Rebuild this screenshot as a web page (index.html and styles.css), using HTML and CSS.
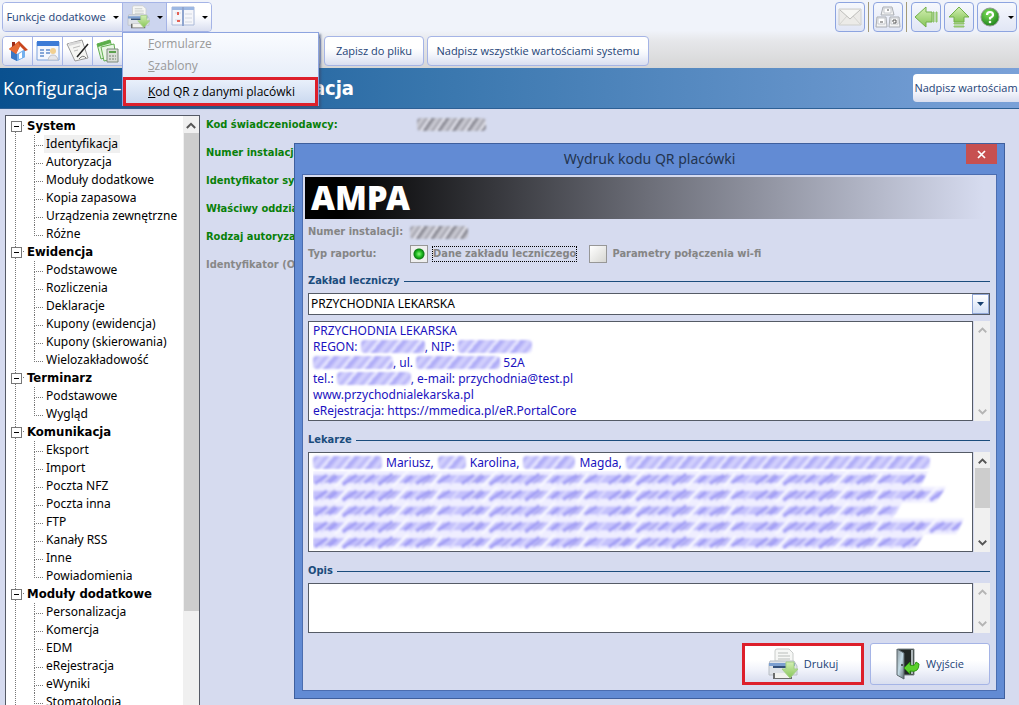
FILE: index.html
```html
<!DOCTYPE html>
<html lang="pl">
<head>
<meta charset="utf-8">
<title>Konfiguracja – System – Identyfikacja</title>
<link rel="stylesheet" href="styles.css">
</head>
<body>
<svg class="defs" aria-hidden="true">
  <defs>
    <linearGradient id="gGreen" x1="0" y1="0" x2="0" y2="1"><stop offset="0" stop-color="#d4efb4"/><stop offset="1" stop-color="#86c558"/></linearGradient>
    <linearGradient id="gDoor" x1="0" y1="0" x2="1" y2="1"><stop offset="0" stop-color="#8f999f"/><stop offset=".5" stop-color="#c3dbe5"/><stop offset="1" stop-color="#5f6b70"/></linearGradient>
    <radialGradient id="gHelp" cx=".4" cy=".3" r=".8"><stop offset="0" stop-color="#7ddf5a"/><stop offset="1" stop-color="#157a14"/></radialGradient>
    <filter id="soft" x="-5%" y="-20%" width="110%" height="140%"><feGaussianBlur stdDeviation="0.9"/></filter>
    <pattern id="scribble" width="148" height="16" patternUnits="userSpaceOnUse">
      <path d="M0 0H148V16H0Z" fill="#eeedff"/>
      <path d="M0 4H148V12H0Z" fill="#c4c1fc"/>
      <path d="M2 13 14 4M16 12 24 5M30 14 44 4M52 12 62 4M66 14 80 3M92 12 100 5M104 13 118 4M126 12 138 4" stroke="#a19df5" stroke-width="3"/>
      <path d="M22 16 38 0M80 16 96 0M118 16 130 2" stroke="#f8f8ff" stroke-width="3"/>
      <path d="M8 14 18 4M46 14 56 4M60 14 70 4M98 14 108 4M138 14 147 4" stroke="#dddbfe" stroke-width="2"/>
      <path d="M12 12 22 3M42 13 52 4M74 13 84 4M110 14 122 3" stroke="#8580de" stroke-width="1"/>
    </pattern>
    <symbol id="printer" viewBox="0 0 30 32">
      <path d="M7 13V3Q7 1 9 1H21L25 5V14Z" fill="#f6f7f5" stroke="#c9ccca"/>
      <path d="M10 5H20M10 8H22M10 11H22" stroke="#b9bdba"/>
      <path d="M2 13H26L29 18V27H1V16Z" fill="#dfe3e8" stroke="#b8bec5"/>
      <path d="M1 15H27V18H1Z" fill="#7c9fd0"/><path d="M5 18H23V20H5Z" fill="#34507a"/>
      <path d="M5 25H24V31H5Z" fill="#6b6d6c"/><path d="M7 25H22V30H7Z" fill="#f2f2ee"/>
      <path d="M18 14H26V21H30L22 30 14 21H18Z" fill="url(#gGreen)" stroke="#a4cf85"/>
    </symbol>
    <symbol id="up" viewBox="0 0 12 8"><path d="M1 7 6 2 11 7" fill="none" stroke="currentColor" stroke-width="2.4"/></symbol>
    <symbol id="down" viewBox="0 0 12 8"><path d="M1 1 6 6 11 1" fill="none" stroke="currentColor" stroke-width="2.4"/></symbol>
  </defs>
</svg>

<header class="top">
  <div class="bar">
    <div class="group">
      <button class="seg wide">Funkcje dodatkowe<i class="caret"></i></button>
      <button class="seg open" aria-label="Drukuj"><svg width="23" height="24"><use href="#printer"/></svg><i class="caret"></i></button>
      <button class="seg" aria-label="Widok">
        <svg width="24" height="22" viewBox="0 0 24 22"><path d="M1 1H23V19H1Z" fill="#f5f6fa" stroke="#aab9d8"/><path d="M1 1H23V4H1Z" fill="#9db8e2"/><path d="M12 1V20" stroke="#8fa5cf" stroke-width="2"/><path d="M4 7H10M4 14H10" stroke="#d4d9e5"/><path d="M7 6V9M6 15H9" stroke="#e46155" stroke-width="2"/><path d="M14 8H21M14 12H21M14 16H21" stroke="#d3d8e2"/></svg>
        <i class="caret"></i></button>
    </div>
    <div class="right">
      <button class="tool" aria-label="Poczta"><svg width="24" height="18" viewBox="0 0 24 18"><path d="M1 1H23V17H1Z" fill="#ecebe8" stroke="#cfcfcc"/><path d="M1 17 9 8M23 17 15 8" stroke="#d4d4d0"/><path d="M2 2 12 11 22 2" fill="#f7f7f4" stroke="#bdbdba"/></svg></button>
      <span class="sep"></span>
      <button class="tool" aria-label="Klawiatura"><svg width="26" height="24" viewBox="0 0 26 24"><g fill="#f3f3f3" stroke="#a9adb3"><path d="M8 2H17L19 10H6Z"/><path d="M2 12H11L12 22H1Z"/><path d="M15 12H24L25 22H14Z"/></g><g fill="#fff" stroke="#c6c9ce"><path d="M9 3H16V8H9ZM3 13H10V19H3ZM16 13H23V19H16Z"/></g><path d="M12 5H14M5 17H8M18 17V15H21V18H18" stroke="#555" fill="none"/></svg></button>
      <span class="sep"></span>
      <button class="tool" aria-label="Wstecz"><svg width="24" height="22" viewBox="0 0 24 22"><path d="M1 11 12 1V6H18V16H12V21Z" fill="url(#gGreen)" stroke="#72b04b"/><path d="M19 6H20V16H19ZM22 6H23V16H22Z" fill="#a9d685" stroke="#8cc266"/></svg></button>
      <button class="tool" aria-label="W górę"><svg width="22" height="22" viewBox="0 0 22 22"><path d="M11 1 21 11H16V16H6V11H1Z" fill="url(#gGreen)" stroke="#72b04b"/><path d="M6 17H16V18H6ZM6 20H16V21H6Z" fill="#a9d685" stroke="#8cc266"/></svg></button>
      <button class="tool help" aria-label="Pomoc"><svg width="20" height="20" viewBox="0 0 20 20"><circle cx="10" cy="10" r="9" fill="url(#gHelp)" stroke="#8e9a8e"/><path d="M7 8Q7 5 10 5T13 8Q13 9.500 10 11V12.500" fill="none" stroke="#fff" stroke-width="2.200"/><circle cx="10" cy="15" r="1.300" fill="#fff"/></svg><i class="caret"></i></button>
    </div>
  </div>
  <div class="bar">
    <div class="group icons">
      <button class="seg" aria-label="Start"><svg width="22" height="22" viewBox="0 0 22 22"><path d="M4 11 9 16 18 12V17L10 21 4 18Z" fill="#4b8edb"/><path d="M4 10 10 14V21L4 18Z" fill="#3a77c4"/><path d="M10 14 18 9V17L10 21Z" fill="#73b0ee"/><path d="M12 14 15 12V18L12 19Z" fill="#fff"/><path d="M2 9 12 1 21 10 18 11 13 6 9 14Z" fill="#c9471e"/><path d="M2 9 11 2 13 6 9 14Z" fill="#e56b35"/><path d="M5 2H8V5L5 7Z" fill="#9b2c18"/></svg></button>
      <button class="seg" aria-label="Kalendarz"><svg width="24" height="22" viewBox="0 0 24 22"><path d="M1 2H23V20H1Z" fill="#f4f7fd" stroke="#7ba1dd"/><path d="M1 1H23V6H1Z" fill="#3c7bd6"/><path d="M4 10H8M10 10H14M4 13H8M10 13H14M4 16H8" stroke="#86a7d8" stroke-width="2"/><circle cx="17" cy="11" r="3" fill="#f1d092"/><path d="M12 20Q13 15 17 15T22 20Z" fill="#e5e6ea" stroke="#c2c5cb"/></svg></button>
      <button class="seg" aria-label="Notatnik"><svg width="24" height="24" viewBox="0 0 24 24"><path d="M1 5 16 1 22 19 9 22Z" fill="#f5f5f3" stroke="#999"/><path d="M3 4 14 2 15 4 3 7Z" fill="#d8d8d8"/><path d="M7 9 14 7M8 12 12 11" stroke="#bcbcbc"/><path d="M22 5 11 18" stroke="#222" stroke-width="1.500"/><path d="M13 20Q17 15 20 19" fill="none" stroke="#777"/></svg></button>
      <button class="seg" aria-label="Rozliczenia"><svg width="24" height="24" viewBox="0 0 24 24"><path d="M1 5 14 1 18 16 5 20Z" fill="#e2f3dc" stroke="#63af52"/><path d="M1 5 14 1 15 4 2 8Z" fill="#5bae4a"/><path d="M5 8 18 5 20 19 8 22Z" fill="#eaf6e6" stroke="#63af52"/><path d="M11 10H22V23H11Z" fill="#d9ddd8" stroke="#7d8a7b"/><path d="M13 12H20V14H13Z" fill="#5ca04e"/><path d="M13 17H20M13 20H20" stroke="#758273" stroke-dasharray="2 1"/></svg></button>
      <span class="rest"></span>
    </div>
    <button class="btn save">Zapisz do pliku</button>
    <button class="btn over">Nadpisz wszystkie wartościami systemu</button>
  </div>
</header>

<div class="title">
  <h1>Konfiguracja – <b>System – Identyfikacja</b></h1>
  <button>Nadpisz wartościam</button>
</div>

<main>
  <nav class="tree">
    <ul>
      <li><b>System</b><ul><li><a href="#" class="sel">Identyfikacja</a></li><li><a href="#">Autoryzacja</a></li><li><a href="#">Moduły dodatkowe</a></li><li><a href="#">Kopia zapasowa</a></li><li><a href="#">Urządzenia zewnętrzne</a></li><li><a href="#">Różne</a></li></ul></li>
      <li><b>Ewidencja</b><ul><li><a href="#">Podstawowe</a></li><li><a href="#">Rozliczenia</a></li><li><a href="#">Deklaracje</a></li><li><a href="#">Kupony (ewidencja)</a></li><li><a href="#">Kupony (skierowania)</a></li><li><a href="#">Wielozakładowość</a></li></ul></li>
      <li><b>Terminarz</b><ul><li><a href="#">Podstawowe</a></li><li><a href="#">Wygląd</a></li></ul></li>
      <li><b>Komunikacja</b><ul><li><a href="#">Eksport</a></li><li><a href="#">Import</a></li><li><a href="#">Poczta NFZ</a></li><li><a href="#">Poczta inna</a></li><li><a href="#">FTP</a></li><li><a href="#">Kanały RSS</a></li><li><a href="#">Inne</a></li><li><a href="#">Powiadomienia</a></li></ul></li>
      <li><b>Moduły dodatkowe</b><ul><li><a href="#">Personalizacja</a></li><li><a href="#">Komercja</a></li><li><a href="#">EDM</a></li><li><a href="#">eRejestracja</a></li><li><a href="#">eWyniki</a></li><li><a href="#">Stomatologia</a></li></ul></li>
    </ul>
    <div class="scroll"><svg width="10" height="7"><use href="#up"/></svg><i class="thumb"></i></div>
  </nav>
  <section class="fields">
    <div>Kod świadczeniodawcy: <i class="blot code"></i></div>
    <div>Numer instalacji:</div>
    <div>Identyfikator systemu:</div>
    <div>Właściwy oddział NFZ:</div>
    <div>Rodzaj autoryzacji:</div>
    <div class="off">Identyfikator (OID):</div>
  </section>
</main>

<div class="menu" role="menu">
  <button role="menuitem" disabled><u>F</u>ormularze</button>
  <button role="menuitem" disabled><u>S</u>zablony</button>
  <button role="menuitem" class="marked"><u>K</u>od QR z danymi placówki</button>
</div>

<div class="dialog" role="dialog" aria-labelledby="dlg">
  <div class="caption"><h2 id="dlg">Wydruk kodu QR placówki</h2>
    <button class="close" aria-label="Zamknij"><svg width="9" height="9" viewBox="0 0 9 9"><path d="M1 1 8 8M8 1 1 8" stroke="#fff" stroke-width="1.700"/></svg></button></div>
  <form class="body">
    <div class="banner">AMPA</div>
    <div class="line"><span class="lab">Numer instalacji:</span><i class="blot num"></i></div>
    <div class="line radios"><span class="lab">Typ raportu:</span>
      <input type="radio" name="typ" id="r1" checked><label for="r1" class="focus">Dane zakładu leczniczego</label>
      <input type="radio" name="typ" id="r2"><label for="r2">Parametry połączenia wi-fi</label></div>

    <h3><label for="zak">Zakład leczniczy</label></h3>
    <div class="combo"><select id="zak"><option>PRZYCHODNIA LEKARSKA</option></select><i><svg width="7" height="4" viewBox="0 0 7 4"><path d="M0 0H7L3.500 4Z" fill="#17406f"/></svg></i></div>
    <div class="area tall">
      <div class="text">PRZYCHODNIA LEKARSKA<br>REGON: <i class="blot b w64"></i>, NIP: <i class="blot b w74"></i><br><i class="blot b w80"></i>, ul. <i class="blot b w84"></i> 52A<br>tel.: <i class="blot b w74"></i>, e-mail: przychodnia@test.pl<br>www.przychodnialekarska.pl<br>eRejestracja: https://mmedica.pl/eR.PortalCore</div>
      <div class="scroll idle"><svg width="9" height="6"><use href="#up"/></svg><svg width="9" height="6"><use href="#down"/></svg></div>
    </div>

    <h3>Lekarze</h3>
    <div class="area tall">
      <div class="text docs"><div class="names"><i class="blot b w70"></i> Mariusz, <i class="blot b w30"></i> Karolina, <i class="blot b w54"></i> Magda, <i class="blot b long"></i></div>
        <svg class="hatch" viewBox="0 0 660 80" preserveAspectRatio="none" aria-hidden="true"><g fill="url(#scribble)" filter="url(#soft)"><path d="M0 0H620L612 16H0Z"/><path d="M0 16H638L628 32H0Z"/><path d="M0 32H594L584 48H0Z"/><path d="M0 48H656L648 64H0Z"/><path d="M0 64H616L606 79H0Z"/></g></svg></div>
      <div class="scroll"><svg width="9" height="6"><use href="#up"/></svg><i class="thumb"></i><svg class="end" width="9" height="6"><use href="#down"/></svg></div>
    </div>

    <h3><label for="opis">Opis</label></h3>
    <div class="area short">
      <textarea class="text" id="opis"></textarea>
      <div class="scroll idle"><svg width="9" height="6"><use href="#up"/></svg><svg width="9" height="6"><use href="#down"/></svg></div>
    </div>

    <div class="actions">
      <button type="button" class="act print"><svg width="30" height="32"><use href="#printer"/></svg>Drukuj</button>
      <button type="button" class="act"><svg width="24" height="32" viewBox="0 0 24 32"><path d="M2 1H18V27H6Z" fill="#222825" stroke="#7b8588"/><path d="M1 1 8 5V31L1 27Z" fill="url(#gDoor)" stroke="#59656a"/><path d="M16 2V26" stroke="#aeb7ba" stroke-width="2"/><circle cx="6" cy="17" r="1" fill="#333"/><path d="M8 20 14 14V17Q19 19 20 14L23 16Q23 25 14 23V26Z" fill="#5cd02c" stroke="#2f9714"/></svg>Wyjście</button>
    </div>
  </form>
</div>
</body>
</html>
```

FILE: styles.css
```css
* { box-sizing: border-box; }
body {
  margin: 0; height: 100vh; overflow: hidden; display: flex; flex-direction: column;
  position: relative; background: #d6dbef; color: #000;
  font: 12px/18px "Noto Sans", sans-serif;
}
button, select, textarea { font: inherit; margin: 0; }
button { padding: 0; border: 0; background: none; }
svg { display: block; flex: none; }
.defs { position: absolute; width: 0; height: 0; }
ul { list-style: none; margin: 0; padding: 0; }

/* toolbars */
.top { display: flex; flex-direction: column; gap: 4px; height: 68px; padding: 2px 2px 0; flex: none;
  background: linear-gradient(#f0f3fa 45%, #e6e7ea 60%, #d6d6d6); }
.bar { display: flex; height: 30px; gap: 3px; }
.group { display: flex; border: 1px solid #a5b4e6; border-radius: 4px; overflow: hidden; flex: none; }
.seg, .tool, .btn, .title button, .act {
  display: flex; align-items: center; justify-content: center; color: #1d4376;
  background: linear-gradient(#fff 40%, #f2f4fb 65%, #d9deef);
  font-family: "Open Sans", sans-serif; font-size: 11px; white-space: nowrap;
}
.seg { width: 44px; gap: 7px; border-right: 1px solid #a5b4e6; }
.seg:last-child { border-right: 0; }
.seg.wide { width: 120px; }
.seg.open { background: #ccd5ef; }
.icons .seg { width: 30px; }
.icons .rest { width: 197px; background: linear-gradient(#fff 40%, #d9deef); }
.caret { border: 3px solid transparent; border-top-color: #000; border-bottom: 0; }
.right { display: flex; gap: 3px; margin-left: auto; }
.tool { width: 30px; border: 1px solid #8da4e0; border-radius: 4px; background: linear-gradient(#f6f8fd, #e1e6f5); }
.help { width: 40px; gap: 8px; }
.sep { width: 2px; border-left: 1px solid #a39a78; }
.btn { border: 1px solid #a5b4e6; border-radius: 4px; }
.save { width: 100px; }
.over { width: 222px; }

.title { display: flex; align-items: center; height: 41px; flex: none; padding-left: 3px; color: #fff;
  border-bottom: 1px solid #2d6095; background: linear-gradient(90deg, #09508f, #3876ad 42%, #7aa1d8); }
h1 { margin: 0; font: 18px/28px "Open Sans", sans-serif; white-space: nowrap; }
h1 b { font-family: "DejaVu Sans Condensed", sans-serif; font-size: 20px; }
.title button { margin-left: auto; width: 106px; height: 28px; border-radius: 4px 0 0 4px; }

/* configuration tree */
main { display: flex; flex: 1; min-height: 0; padding: 6px 0 0 5px; }
.tree { display: flex; width: 195px; flex: none; background: #fff; border: 1px solid #555a66; border-bottom: 0; overflow: hidden; }
.tree > ul { flex: 1; padding: 1px 0 0 5px; white-space: nowrap; min-width: 0; }
.tree > ul > li { position: relative; padding-left: 16px; }
.tree > ul > li::before { content: ""; position: absolute; left: 4px; top: 8px; bottom: -8px; width: 8px;
  border: 1px dotted #777; border-width: 1px 0 0 1px; }
.tree > ul > li::after { content: ""; position: absolute; left: 0; top: 4px; width: 9px; height: 9px;
  border: 1px solid #777; background: linear-gradient(#000, #000) center / 5px 1px no-repeat #fff; }
.tree b { display: block; height: 18px; font: bold 13px/18px "DejaVu Sans Condensed", sans-serif; }
.tree li li { position: relative; padding-left: 17px; }
.tree li li::before { content: ""; position: absolute; left: 7px; top: 0; height: 10px; width: 8px;
  border: 1px dotted #777; border-width: 0 0 1px 1px; }
.tree li li:not(:last-child)::after { content: ""; position: absolute; left: 7px; top: 10px; bottom: 0; border-left: 1px dotted #777; }
.tree a { display: inline-block; height: 18px; padding: 0 2px; color: #000; text-decoration: none; vertical-align: top; }
.tree .sel { background: #f0f0f0; }

.scroll { display: flex; flex-direction: column; align-items: center; justify-content: space-between;
  width: 16px; flex: none; padding: 6px 0; gap: 4px; background: #f0f0f0; color: #555; }
.scroll.idle { color: #b4b4b4; }
.scroll .thumb { width: 15px; height: 40px; background: #cdcdcd; }
.scroll .end { margin-top: auto; }
.scroll:has(.thumb) { justify-content: flex-start; }
.tree .thumb { height: 478px; flex: none; }

.fields { padding: 0 6px; color: #098009; font: bold 11px/18px "DejaVu Sans Condensed", sans-serif; white-space: nowrap; }
.fields div { display: flex; align-items: center; height: 28px; padding-bottom: 9px; gap: 79px; }
.fields .off { color: #888; }

/* smudged-out values */
.blot { display: inline-block; height: 13px; border-radius: 4px; vertical-align: -2px; filter: blur(1px);
  background: repeating-linear-gradient(125deg, #8b8b95 0 2px, #c9c9d2 4px 6px, #9c9ca6 8px, #dddde6 10px 12px); }
.code { width: 69px; }
.num { width: 58px; }
.b { background: repeating-linear-gradient(130deg, #b0adf7 0 3px, #d2d0fc 6px 8px, #b6b3f8 11px, #e6e5ff 14px 16px); }
.w30 { width: 28px; } .w54 { width: 52px; } .w64 { width: 64px; } .w70 { width: 69px; }
.w74 { width: 74px; } .w80 { width: 80px; } .w84 { width: 84px; }

/* drop-down menu */
.menu { position: absolute; left: 122px; top: 32px; width: 197px; display: flex; flex-direction: column;
  border: 1px solid #8da4e0; border-bottom: 0; background: linear-gradient(#fafcff, #dbe4f4); box-shadow: 2px 2px 2px #39486a99; }
.menu button { height: 22px; padding-left: 25px; text-align: left; font-family: "Open Sans", sans-serif; color: #000; }
.menu button:disabled { color: #999; }
.menu .marked { height: 29px; padding-left: 22px; border: 3px solid #dd1f2b; background: linear-gradient(#e9f0fb, #cbd9ef); }

/* print dialog */
.dialog { position: absolute; left: 294px; right: 14px; top: 143px; padding: 0 7px 7px; background: #628bd4;
  border: 1px solid #3f5f9d; }
.caption { position: relative; display: flex; justify-content: center; height: 30px; }
h2 { margin: 0; font: 14px/30px "Noto Sans", sans-serif; color: #22344f; }
.close { position: absolute; right: 0; top: 0; width: 31px; height: 20px; display: flex; align-items: center; justify-content: center; background: #c75050; }
.body { padding: 2px 6px 5px 5px; background: #d6dbef; border: 1px solid #4b6db0; }
.banner { height: 42px; margin: 0 0 4px -3px; padding-left: 6px; color: #fff;
  font: 900 33px/42px "Noto Sans", sans-serif; background: linear-gradient(90deg, #000 5%, #6c6e78 50%, #d6dbef 99%); }
.line { display: flex; align-items: center; height: 18px; font: bold 11px/18px "DejaVu Sans Condensed", sans-serif; color: #858585; }
.radios { height: 26px; }
.lab { width: 102px; }
input[type="radio"] { appearance: none; width: 18px; height: 18px; margin: 0 5px 0 0; border: 1px solid #979797; background: linear-gradient(135deg, #fff, #d6d6d2); }
input[type="radio"]:checked { background: radial-gradient(circle at 50% 50%, #8ff47c 0, #21bd22 3px, #0d7d13 5px, transparent 6px), #efefef; }
label + input[type="radio"] { margin-left: 13px; }
.focus { outline: 1px dotted #000; line-height: 14px; }
h3 { display: flex; align-items: center; gap: 4px; height: 24px; margin: 2px 0 0; font: bold 11px/18px "DejaVu Sans Condensed", sans-serif; color: #1b4c7c; }
h3::after { content: ""; flex: 1; border-top: 1px solid #1b4c7c; }
.combo { position: relative; display: flex; height: 22px; margin-bottom: 6px; }
.combo select { flex: 1; appearance: none; padding: 0 2px; border: 1px solid #555b66; border-radius: 0; background: #fff; color: #000; }
.combo i { position: absolute; right: 1px; top: 1px; bottom: 1px; width: 17px; display: flex; align-items: center; justify-content: center;
  pointer-events: none; border: 1px solid #91a7d6; background: linear-gradient(#fff, #d3e0f5); }
.area { display: flex; gap: 1px; margin-bottom: 7px; }
.tall { height: 100px; }
.short { height: 50px; margin-bottom: 10px; }
.text { flex: 1; min-width: 0; padding: 1px 4px; border: 1px solid #555b66; border-radius: 0; background: #fff; color: #1a12c0; line-height: 16px; overflow: hidden; resize: none; white-space: nowrap; }
.names { display: flex; align-items: center; gap: 4px; height: 17px; }
.long { width: 304px; }
.hatch { width: 100%; height: 79px; }
.actions { display: flex; justify-content: flex-end; gap: 6px; }
.act { width: 120px; height: 42px; gap: 6px; border: 1px solid #a5b4e6; border-radius: 3px; }
.act.print { width: 122px; border: 3px solid #dd1f2b; border-radius: 0; }
```
